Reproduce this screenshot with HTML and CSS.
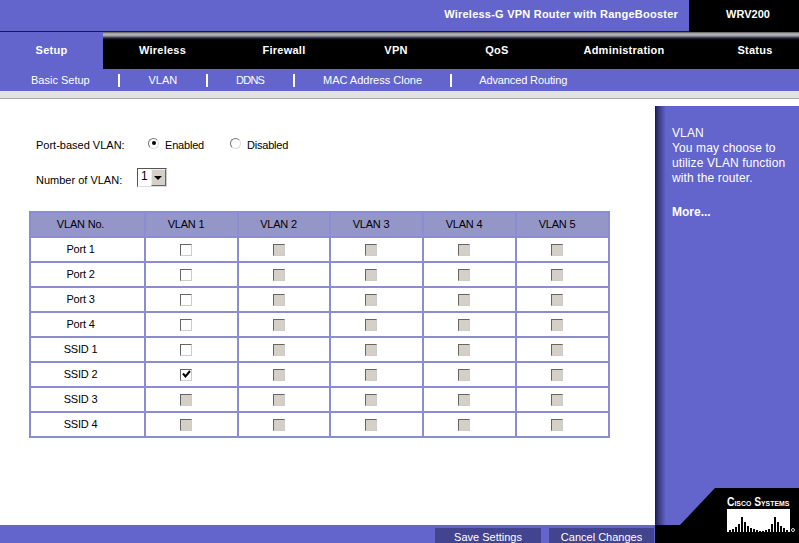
FILE: index.html
```html
<!DOCTYPE html>
<html lang="en">
<head>
  <meta charset="UTF-8" />
  <title>VLAN</title>
  <link rel="stylesheet" href="styles.css">
</head>
<body>

  <div class="top-bar">
    <div class="product-name">Wireless-G VPN Router with RangeBooster</div>
    <div class="model-name">WRV200</div>
  </div>

  <div class="main-nav">
    <a class="tab tab-setup active">Setup</a>
    <a class="tab tab-wireless">Wireless</a>
    <a class="tab tab-firewall">Firewall</a>
    <a class="tab tab-vpn">VPN</a>
    <a class="tab tab-qos">QoS</a>
    <a class="tab tab-admin">Administration</a>
    <a class="tab tab-status">Status</a>
  </div>

  <div class="sub-nav">
    <a>Basic Setup</a>
    <span class="sep"></span>
    <a>VLAN</a>
    <span class="sep"></span>
    <a class="ddns">DDNS</a>
    <span class="sep"></span>
    <a>MAC Address Clone</a>
    <span class="sep"></span>
    <a class="routing">Advanced Routing</a>
  </div>

  <div class="grey-band"></div>

  <div class="page-body">
    <div class="content">
      <div class="form-row row-mode">
        <span class="form-label">Port-based VLAN:</span>
        <span class="radio checked"></span>
        <span class="radio-text">Enabled</span>
        <span class="radio radio-second"></span>
        <span class="radio-text">Disabled</span>
      </div>

      <div class="form-row row-count">
        <span class="form-label">Number of VLAN:</span>
        <span class="select-box">
          <span class="select-value">1</span>
          <span class="select-arrow"></span>
        </span>
      </div>

      <table class="vlan-table">
        <thead>
          <tr>
            <th class="col-name">VLAN No.</th>
            <th class="col-1">VLAN 1</th>
            <th class="col-2">VLAN 2</th>
            <th class="col-3">VLAN 3</th>
            <th class="col-4">VLAN 4</th>
            <th class="col-5">VLAN 5</th>
          </tr>
        </thead>
        <tbody>
          <tr>
            <td>Port 1</td>
            <td><span class="box"></span></td>
            <td><span class="box off"></span></td>
            <td><span class="box off"></span></td>
            <td><span class="box off"></span></td>
            <td><span class="box off"></span></td>
          </tr>
          <tr>
            <td>Port 2</td>
            <td><span class="box"></span></td>
            <td><span class="box off"></span></td>
            <td><span class="box off"></span></td>
            <td><span class="box off"></span></td>
            <td><span class="box off"></span></td>
          </tr>
          <tr>
            <td>Port 3</td>
            <td><span class="box"></span></td>
            <td><span class="box off"></span></td>
            <td><span class="box off"></span></td>
            <td><span class="box off"></span></td>
            <td><span class="box off"></span></td>
          </tr>
          <tr>
            <td>Port 4</td>
            <td><span class="box"></span></td>
            <td><span class="box off"></span></td>
            <td><span class="box off"></span></td>
            <td><span class="box off"></span></td>
            <td><span class="box off"></span></td>
          </tr>
          <tr>
            <td>SSID 1</td>
            <td><span class="box"></span></td>
            <td><span class="box off"></span></td>
            <td><span class="box off"></span></td>
            <td><span class="box off"></span></td>
            <td><span class="box off"></span></td>
          </tr>
          <tr>
            <td>SSID 2</td>
            <td>
              <span class="box">
                <svg class="tick" width="9" height="9" viewBox="0 0 9 9"><path d="M1 3.500 L3.500 6.500 L8 1" fill="none" stroke="#000" stroke-width="2"/></svg>
              </span>
            </td>
            <td><span class="box off"></span></td>
            <td><span class="box off"></span></td>
            <td><span class="box off"></span></td>
            <td><span class="box off"></span></td>
          </tr>
          <tr>
            <td>SSID 3</td>
            <td><span class="box off"></span></td>
            <td><span class="box off"></span></td>
            <td><span class="box off"></span></td>
            <td><span class="box off"></span></td>
            <td><span class="box off"></span></td>
          </tr>
          <tr>
            <td>SSID 4</td>
            <td><span class="box off"></span></td>
            <td><span class="box off"></span></td>
            <td><span class="box off"></span></td>
            <td><span class="box off"></span></td>
            <td><span class="box off"></span></td>
          </tr>
        </tbody>
      </table>

      <div class="footer-bar">
        <button class="action-button btn-save">Save Settings</button>
        <button class="action-button btn-cancel">Cancel Changes</button>
      </div>
    </div>

    <div class="help-panel">
      <div class="help-text">VLAN<br>You may choose to<br>utilize VLAN function<br>with the router.</div>
      <div class="help-more">More...</div>
    </div>

    <!-- black corner sits on top of the help panel and footer -->
    <svg class="logo-corner" width="144" height="55" viewBox="0 0 144 55">
      <polygon points="144,0 60,0 25,37 0,37 0,55 144,55" fill="#000"/>
    </svg>
    <div class="logo">
      <div class="logo-name">Cisco Systems</div>
      <div class="logo-bars">
        <svg width="63" height="23" viewBox="0 0 63 23">
          <path d="M3 23v-2M6 23v-3M9 23v-5M12 23v-8M15 23v-15M18 23v-10M21 23v-6M24 23v-4M27 23v-3M30 23v-2M33 23v-1M36 23v-1M39 23v-2M42 23v-3M45 23v-8M48 23v-15M51 23v-10M54 23v-6M57 23v-4M60 23v-2" stroke="#000" stroke-width="2" fill="none"/>
          <circle cx="66" cy="21" r="1.500" fill="none" stroke="#ddd" stroke-width="1"/>
        </svg>
      </div>
    </div>
  </div>

</body>
</html>
```

FILE: styles.css
```css
html, body {
  margin: 0;
  padding: 0;
  height: 543px;
  overflow: hidden;
}

body {
  font-family: "Liberation Sans", Arial, sans-serif;
  font-size: 11px;
  color: #000;
  background: #fff;
}

/* Top bar */
.top-bar {
  display: flex;
  justify-content: flex-end;
  height: 31px;
  background: #6365cc;
  border-bottom: 1px solid #1a1a40;
  color: #fff;
  font-weight: bold;
}

.product-name {
  line-height: 29px;
  padding-right: 11px;
  letter-spacing: 0.23px;
}

.model-name {
  box-sizing: border-box;
  width: 110px;
  height: 32px;
  padding-left: 8px;
  background: #000;
  text-align: center;
  line-height: 29px;
}

/* Main nav */
.main-nav {
  display: flex;
  height: 37px;
  background: linear-gradient(to bottom, #555 0, #bbb 2px, #999 4px, #224 6px, #000 8px);
}

.tab {
  color: #fff;
  font-weight: bold;
  font-size: 11px;
  letter-spacing: 0.25px;
  text-align: center;
  line-height: 36px;
}

.tab.active {
  background: #6365cc;
}

.tab-setup { width: 103px; }
.tab-wireless { width: 119px; }
.tab-firewall { width: 124px; }
.tab-vpn { width: 100px; }
.tab-qos { width: 102px; }
.tab-admin { width: 152px; }
.tab-status { width: 88px; padding-left: 11px; }

/* Sub nav */
.sub-nav {
  display: flex;
  align-items: center;
  gap: 28.4px;
  height: 22px;
  padding-left: 31px;
  background: #6365cc;
  color: #fff;
  font-size: 11px;
}

.ddns {
  letter-spacing: -0.75px;
}

.routing {
  margin-left: -1.6px;
  letter-spacing: -0.12px;
}

.sep {
  width: 2px;
  height: 13px;
  background: #fff;
}

.grey-band {
  height: 7px;
  background: #e2e2e2;
  border-bottom: 1px solid #a8a8a8;
}

/* Page body */
.page-body {
  display: flex;
  position: relative;
  height: 444px;
}

.content {
  display: flex;
  flex-direction: column;
  width: 655px;
  position: relative;
}

.form-row {
  display: flex;
  align-items: center;
  padding-left: 36px;
}

.row-mode {
  margin-top: 38px;
  height: 16px;
}

.row-count {
  margin-top: 17px;
  height: 20px;
}

.form-label {
  width: 112px;
}

.row-count .form-label {
  width: 101px;
}

.radio {
  box-sizing: border-box;
  width: 11px;
  height: 11px;
  border-radius: 50%;
  border: 1px solid;
  border-color: #777 #ddd #ddd #777;
  background: #fff;
  margin-right: 6px;
  margin-top: -4px;
  display: flex;
  align-items: center;
  justify-content: center;
}

.radio.checked::after {
  content: "";
  width: 4px;
  height: 4px;
  border-radius: 50%;
  background: #000;
}

.radio-text {
  width: 65px;
  letter-spacing: -0.2px;
}

.select-box {
  box-sizing: border-box;
  display: flex;
  width: 30px;
  height: 19px;
  margin-top: -6px;
  border: 1px solid;
  border-color: #555 #ccc #ddd #555;
  background: #fff;
  font-size: 12px;
}

.select-value {
  flex: 1;
  padding-left: 3px;
  line-height: 15px;
}

.select-arrow {
  position: relative;
  width: 15px;
  background: #d4d0c8;
  border: 1px solid;
  border-color: #eee #666 #666 #eee;
  box-sizing: border-box;
}

.select-arrow::after {
  content: "";
  position: absolute;
  left: 2px;
  top: 6px;
  border-left: 4px solid transparent;
  border-right: 4px solid transparent;
  border-top: 4px solid #000;
}

/* VLAN table */
.vlan-table {
  border-collapse: collapse;
  table-layout: fixed;
  width: 579px;
  margin: 21px 0 0 29px;
  border: 2px solid #6c6cb4;
  text-align: center;
  letter-spacing: -0.2px;
}

.vlan-table th,
.vlan-table td {
  border: 2px solid #8c8cd0;
  padding: 0 11px 1px 0;
  height: 22px;
  font-weight: normal;
}

.vlan-table th:first-child,
.vlan-table td:first-child {
  padding-right: 14px;
}

.vlan-table th {
  background: #9496c8;
}

/* col widths leave out the 2px cell border and the right padding */
.col-name { width: 99px; }
.col-1 { width: 80px; }
.col-2 { width: 79px; }
.col-3 { width: 80px; }
.col-4 { width: 80px; }
.col-5 { width: 80px; }

.box {
  box-sizing: border-box;
  display: inline-block;
  position: relative;
  vertical-align: middle;
  width: 12px;
  height: 12px;
  border: 1px solid;
  border-color: #666 #ccc #ccc #666;
  background: #fff;
}

.box.off {
  background: #d4d0c8;
}

.tick {
  position: absolute;
  left: 1px;
  top: 0;
}

/* Footer */
.footer-bar {
  display: flex;
  gap: 8px;
  position: absolute;
  left: 0;
  right: 0;
  top: 426px;
  height: 18px;
  padding: 3px 0 0 435px;
  box-sizing: border-box;
  background: #6365cc;
}

.action-button {
  flex: none;
  box-sizing: border-box;
  height: 15px;
  padding: 3px 0 0 0;
  border: none;
  background: #42448f;
  color: #fff;
  font-family: "Liberation Sans", Arial, sans-serif;
  font-size: 11px;
  line-height: 12px;
  text-align: center;
}

.btn-save { width: 106px; }
.btn-cancel { width: 105px; }

/* Help panel */
.help-panel {
  box-sizing: border-box;
  width: 144px;
  margin-top: 7px;
  padding: 19px 10px 0 17px;
  background: linear-gradient(to right, #16163a 0, #2e2f70 2px, #4c4da0 7px, #6365cc 11px);
  color: #fff;
  font-size: 12px;
  line-height: 15px;
}

.help-text {
  margin-top: 1px;
  letter-spacing: 0.12px;
}

.help-more {
  margin-top: 19px;
  font-weight: bold;
}

.logo-corner {
  position: absolute;
  left: 655px;
  top: 389px;
}

.logo {
  position: absolute;
  left: 727px;
  top: 397px;
  width: 63px;
}

.logo-name {
  color: #fff;
  font-family: "Liberation Sans", Arial, sans-serif;
  font-weight: bold;
  font-size: 12px;
  font-variant: small-caps;
  line-height: 13px;
  white-space: nowrap;
  transform: scaleX(0.86);
  transform-origin: left;
}

.logo-bars {
  height: 23px;
  background: #fff;
}

.logo-bars svg {
  display: block;
  overflow: visible;
}
```
